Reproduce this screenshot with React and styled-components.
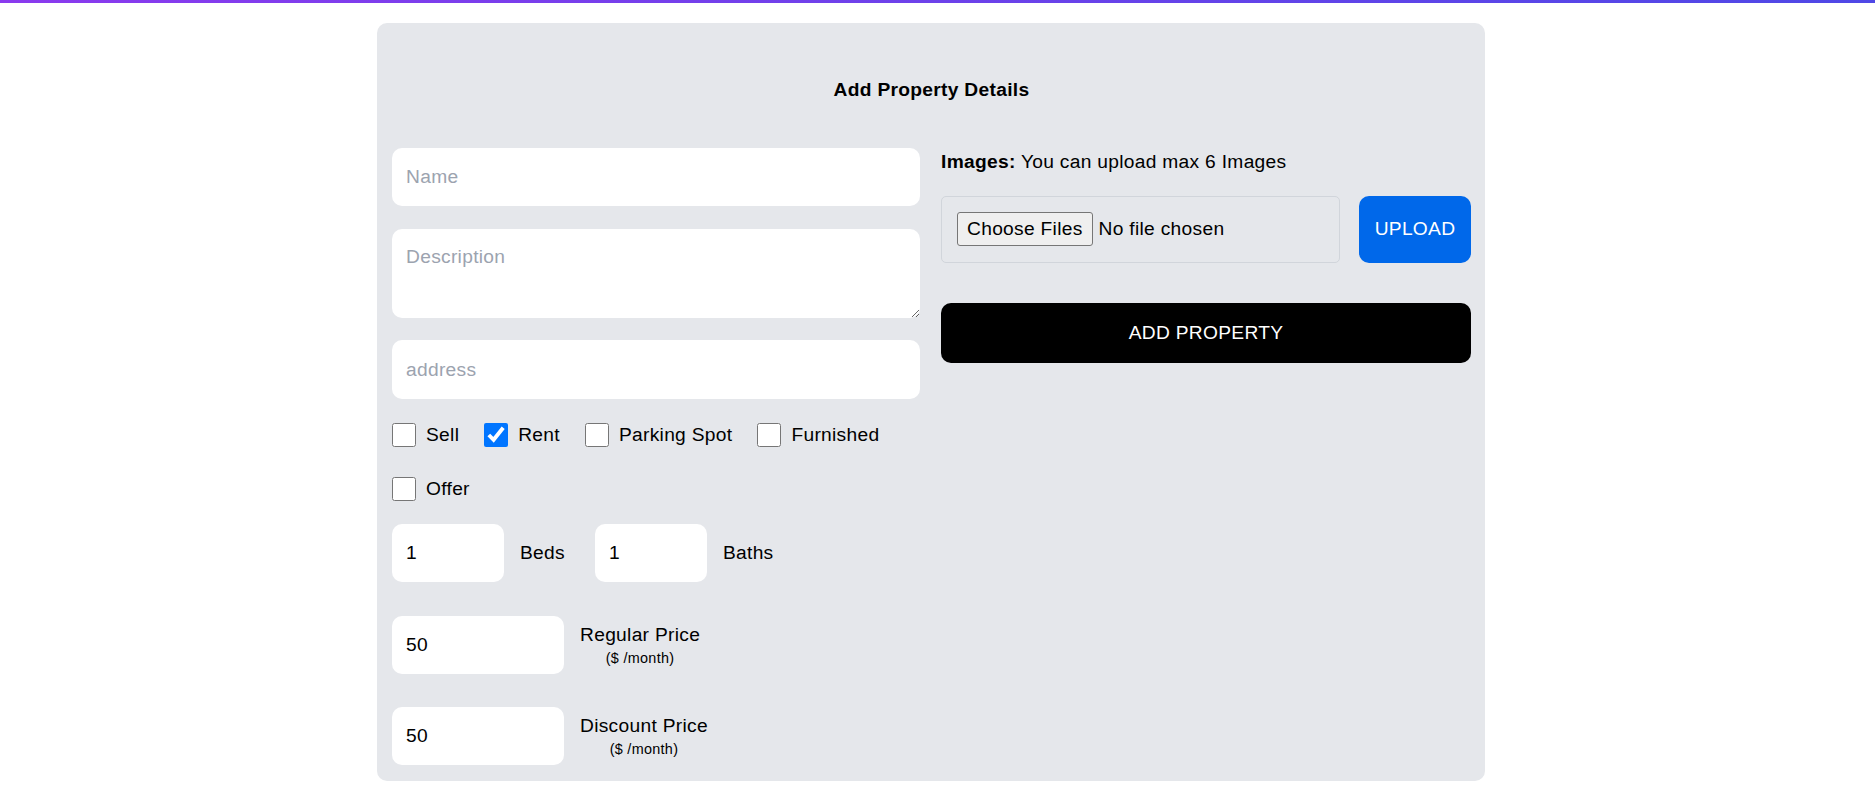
import styled, { createGlobalStyle } from "styled-components"

const GlobalStyle = createGlobalStyle`
  * { box-sizing: border-box; }
  body {
    margin: 0;
    background: #fff;
    font-family: "Liberation Sans", Arial, sans-serif;
    letter-spacing: 0.3px;
    color: #000;
  }
  input, textarea, button {
    letter-spacing: 0.3px;
  }
`

const TopBar = styled.div`
  height: 3px;
  background: linear-gradient(to right, #8a3aee, #4f48e6);
`

const Page = styled.main`
  display: flex;
  justify-content: center;
  padding: 20px 13px 0 0;
`

const Card = styled.section`
  width: 1108px;
  background: #e5e7eb;
  border-radius: 10px;
  padding: 0 14px 16px 15px;
`

const Title = styled.h1`
  margin: 0;
  padding: 53px 0 43px;
  font-size: 19.2px;
  line-height: 28.8px;
  font-weight: 700;
  text-align: center;
`

const Form = styled.form`
  display: grid;
  grid-template-columns: 528px minmax(0, 1fr);
  column-gap: 21px;
  align-items: start;
`

const LeftCol = styled.div`
  display: flex;
  flex-direction: column;
  gap: 22.5px;
`

const RightCol = styled.div`
  display: flex;
  flex-direction: column;
  min-width: 0;
`

const TextInput = styled.input`
  width: ${(p) => p.$width || "100%"};
  height: 58.5px;
  border: none;
  border-radius: 10px;
  background: #fff;
  padding: 0 14px;
  font: inherit;
  font-size: 19.2px;
  color: #000;
  outline: none;
  &::placeholder { color: #9ca3af; }
  &::-webkit-inner-spin-button,
  &::-webkit-outer-spin-button { opacity: 0; }
`

const TextArea = styled.textarea`
  width: 100%;
  height: 89px;
  border: none;
  border-radius: 10px;
  background: #fff;
  padding: 14px;
  font: inherit;
  font-size: 19.2px;
  line-height: 28.8px;
  outline: none;
  &::placeholder { color: #9ca3af; }
`

const CheckGroup = styled.div`
  display: flex;
  flex-wrap: wrap;
  column-gap: 25px;
  row-gap: 30px;
  margin: 2px 0 0;
`

const CheckItem = styled.label`
  display: flex;
  align-items: center;
  gap: 10px;
  font-size: 19.2px;
  height: 24px;
`

const Box = styled.input`
  width: 24px;
  height: 24px;
  margin: 0;
`

const NumberRow = styled.div`
  display: flex;
  align-items: center;
  gap: 30px;
  margin-top: ${(p) => p.$offset || 0}px;
`

const Field = styled.div`
  display: flex;
  align-items: center;
  gap: 16px;
`

const FieldLabel = styled.span`
  font-size: 19.2px;
`

const PriceLabel = styled.div`
  display: flex;
  flex-direction: column;
  align-items: center;
  font-size: 19.2px;
`

const PriceUnit = styled.span`
  font-size: 14.4px;
  margin-top: 4px;
`

const ImagesNote = styled.p`
  margin: 0 0 19px;
  font-size: 19.2px;
  line-height: 28.8px;
  strong { font-weight: 700; }
`

const UploadRow = styled.div`
  display: flex;
  gap: 19px;
`

const FileBox = styled.div`
  flex: 1;
  min-width: 0;
  height: 67px;
  display: flex;
  align-items: center;
  padding: 0 15px;
  border: 1px solid #d1d5db;
  border-radius: 5px;

  input {
    width: 100%;
    min-width: 0;
    font: inherit;
    font-size: 19.2px;
    color: #000;
  }
  input::file-selector-button {
    font: inherit;
    letter-spacing: 0.3px;
    padding: 5px 9px;
    margin-right: 6px;
    border: 1px solid #767676;
    border-radius: 3px;
    background: #efefef;
    color: #000;
  }
`

const UploadButton = styled.button`
  flex: none;
  width: 112px;
  height: 67px;
  border: none;
  border-radius: 10px;
  background: #0068ea;
  color: #fff;
  font: inherit;
  font-size: 19.2px;
`

const SubmitButton = styled.button`
  margin-top: 40px;
  height: 60px;
  border: none;
  border-radius: 10px;
  background: #000;
  color: #fff;
  font: inherit;
  font-size: 19.2px;
`

const options = [
  { id: "sell", label: "Sell", checked: false },
  { id: "rent", label: "Rent", checked: true },
  { id: "parking", label: "Parking Spot", checked: false },
  { id: "furnished", label: "Furnished", checked: false },
  { id: "offer", label: "Offer", checked: false },
]

export default function App() {
  return (
    <>
      <GlobalStyle />
      <TopBar />
      <Page>
        <Card>
          <Title>Add Property Details</Title>
          <Form onSubmit={(e) => e.preventDefault()}>
            <LeftCol>
              <TextInput placeholder="Name" />
              <TextArea placeholder="Description" />
              <TextInput placeholder="address" />

              <CheckGroup>
                {options.map((o) => (
                  <CheckItem key={o.id}>
                    <Box type="checkbox" defaultChecked={o.checked} />
                    {o.label}
                  </CheckItem>
                ))}
              </CheckGroup>

              <NumberRow>
                <Field>
                  <TextInput type="number" defaultValue="1" $width="112px" />
                  <FieldLabel>Beds</FieldLabel>
                </Field>
                <Field>
                  <TextInput type="number" defaultValue="1" $width="112px" />
                  <FieldLabel>Baths</FieldLabel>
                </Field>
              </NumberRow>

              <NumberRow $offset={11}>
                <Field>
                  <TextInput type="number" defaultValue="50" $width="172px" />
                  <PriceLabel>
                    Regular Price
                    <PriceUnit>($ /month)</PriceUnit>
                  </PriceLabel>
                </Field>
              </NumberRow>

              <NumberRow $offset={10}>
                <Field>
                  <TextInput type="number" defaultValue="50" $width="172px" />
                  <PriceLabel>
                    Discount Price
                    <PriceUnit>($ /month)</PriceUnit>
                  </PriceLabel>
                </Field>
              </NumberRow>
            </LeftCol>

            <RightCol>
              <ImagesNote>
                <strong>Images:</strong> You can upload max 6 Images
              </ImagesNote>
              <UploadRow>
                <FileBox>
                  <input type="file" accept="image/*" multiple />
                </FileBox>
                <UploadButton type="button">UPLOAD</UploadButton>
              </UploadRow>
              <SubmitButton type="submit">ADD PROPERTY</SubmitButton>
            </RightCol>
          </Form>
        </Card>
      </Page>
    </>
  )
}
